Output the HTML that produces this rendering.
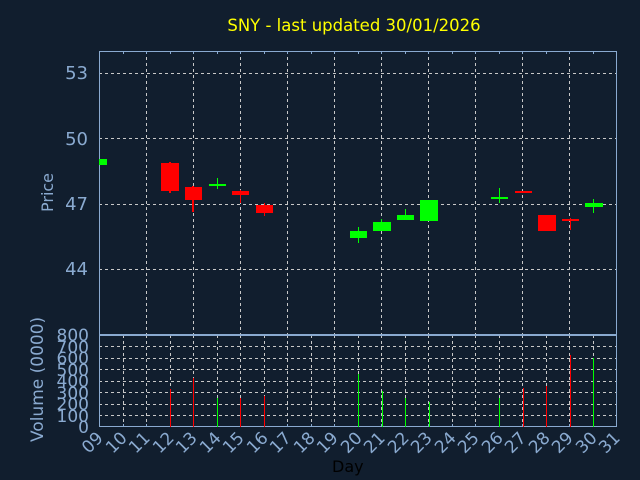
<!DOCTYPE html>
<html><head><style>
html,body{margin:0;padding:0;background:#111e2e;}
svg{display:block;font-family:"DejaVu Sans","Liberation Sans",sans-serif;}
</style></head><body>
<svg width="640" height="480" viewBox="0 0 640 480">
<rect width="640" height="480" fill="#111e2e"/>
<text x="354" y="31" fill="#ffff00" font-size="16.5" text-anchor="middle">SNY - last updated 30/01/2026</text>
<g stroke="#c8c8c8" stroke-width="1" stroke-dasharray="3,3" fill="none">
<line x1="99" y1="73.5" x2="617" y2="73.5"/>
<line x1="99" y1="138.5" x2="617" y2="138.5"/>
<line x1="99" y1="204.5" x2="617" y2="204.5"/>
<line x1="99" y1="269.5" x2="617" y2="269.5"/>
<line x1="146.5" y1="51" x2="146.5" y2="334"/>
<line x1="193.5" y1="51" x2="193.5" y2="334"/>
<line x1="240.5" y1="51" x2="240.5" y2="334"/>
<line x1="287.5" y1="51" x2="287.5" y2="334"/>
<line x1="334.5" y1="51" x2="334.5" y2="334"/>
<line x1="381.5" y1="51" x2="381.5" y2="334"/>
<line x1="428.5" y1="51" x2="428.5" y2="334"/>
<line x1="475.5" y1="51" x2="475.5" y2="334"/>
<line x1="522.5" y1="51" x2="522.5" y2="334"/>
<line x1="569.5" y1="51" x2="569.5" y2="334"/>
<line x1="99" y1="346.5" x2="617" y2="346.5"/>
<line x1="99" y1="358.5" x2="617" y2="358.5"/>
<line x1="99" y1="369.5" x2="617" y2="369.5"/>
<line x1="99" y1="381.5" x2="617" y2="381.5"/>
<line x1="99" y1="392.5" x2="617" y2="392.5"/>
<line x1="99" y1="404.5" x2="617" y2="404.5"/>
<line x1="99" y1="415.5" x2="617" y2="415.5"/>
<line x1="123.5" y1="335" x2="123.5" y2="427"/>
<line x1="146.5" y1="335" x2="146.5" y2="427"/>
<line x1="170.5" y1="335" x2="170.5" y2="427"/>
<line x1="193.5" y1="335" x2="193.5" y2="427"/>
<line x1="217.5" y1="335" x2="217.5" y2="427"/>
<line x1="240.5" y1="335" x2="240.5" y2="427"/>
<line x1="264.5" y1="335" x2="264.5" y2="427"/>
<line x1="287.5" y1="335" x2="287.5" y2="427"/>
<line x1="311.5" y1="335" x2="311.5" y2="427"/>
<line x1="334.5" y1="335" x2="334.5" y2="427"/>
<line x1="358.5" y1="335" x2="358.5" y2="427"/>
<line x1="381.5" y1="335" x2="381.5" y2="427"/>
<line x1="405.5" y1="335" x2="405.5" y2="427"/>
<line x1="428.5" y1="335" x2="428.5" y2="427"/>
<line x1="452.5" y1="335" x2="452.5" y2="427"/>
<line x1="475.5" y1="335" x2="475.5" y2="427"/>
<line x1="499.5" y1="335" x2="499.5" y2="427"/>
<line x1="522.5" y1="335" x2="522.5" y2="427"/>
<line x1="546.5" y1="335" x2="546.5" y2="427"/>
<line x1="569.5" y1="335" x2="569.5" y2="427"/>
<line x1="593.5" y1="335" x2="593.5" y2="427"/>
</g>
<g stroke="#8aaad0" fill="none" stroke-width="1">
<rect x="99.5" y="51.5" width="517" height="283"/>
<rect x="99.5" y="335.5" width="517" height="91"/>
<path d="M123.5 51v3M146.5 51v3M170.5 51v3M193.5 51v3M217.5 51v3M240.5 51v3M264.5 51v3M287.5 51v3M311.5 51v3M334.5 51v3M358.5 51v3M381.5 51v3M405.5 51v3M428.5 51v3M452.5 51v3M475.5 51v3M499.5 51v3M522.5 51v3M546.5 51v3M569.5 51v3M593.5 51v3"/>
<path d="M123.5 427v-3M146.5 427v-3M170.5 427v-3M193.5 427v-3M217.5 427v-3M240.5 427v-3M264.5 427v-3M287.5 427v-3M311.5 427v-3M334.5 427v-3M358.5 427v-3M381.5 427v-3M405.5 427v-3M428.5 427v-3M452.5 427v-3M475.5 427v-3M499.5 427v-3M522.5 427v-3M546.5 427v-3M569.5 427v-3M593.5 427v-3"/>
</g>
<g>
<rect x="99" y="159" width="8" height="6" fill="#00ff00"/>
<rect x="169" y="162" width="2" height="31" fill="#ff0000"/><rect x="161" y="163" width="18" height="28" fill="#ff0000"/>
<rect x="192" y="186" width="2" height="26" fill="#ff0000"/><rect x="185" y="187" width="17" height="13" fill="#ff0000"/>
<rect x="217" y="178" width="1" height="11" fill="#00ff00"/><rect x="209" y="184" width="17" height="2" fill="#00ff00"/>
<rect x="240" y="190" width="1" height="13" fill="#ff0000"/><rect x="232" y="191" width="17" height="4" fill="#ff0000"/>
<rect x="264" y="203" width="1" height="13" fill="#ff0000"/><rect x="256" y="205" width="17" height="8" fill="#ff0000"/>
<rect x="358" y="227" width="1" height="16" fill="#00ff00"/><rect x="350" y="231" width="17" height="7" fill="#00ff00"/>
<rect x="381" y="219" width="1" height="12" fill="#00ff00"/><rect x="373" y="222" width="18" height="9" fill="#00ff00"/>
<rect x="405" y="209" width="1" height="11" fill="#00ff00"/><rect x="397" y="215" width="17" height="5" fill="#00ff00"/>
<rect x="420" y="200" width="18" height="21" fill="#00ff00"/>
<rect x="499" y="188" width="1" height="15" fill="#00ff00"/><rect x="491" y="197" width="17" height="2" fill="#00ff00"/>
<rect x="515" y="191" width="17" height="2" fill="#ff0000"/>
<rect x="538" y="215" width="18" height="16" fill="#ff0000"/>
<rect x="570" y="218" width="1" height="12" fill="#ff0000"/><rect x="562" y="219" width="17" height="2" fill="#ff0000"/>
<rect x="593" y="199" width="1" height="14" fill="#00ff00"/><rect x="585" y="203" width="18" height="4" fill="#00ff00"/>
</g>
<g>
<rect x="170" y="389" width="1" height="38" fill="#ff0000"/>
<rect x="193" y="378" width="1" height="49" fill="#ff0000"/>
<rect x="217" y="398" width="1" height="29" fill="#00ff00"/>
<rect x="240" y="398" width="1" height="29" fill="#ff0000"/>
<rect x="264" y="396" width="1" height="31" fill="#ff0000"/>
<rect x="358" y="374" width="1" height="53" fill="#00ff00"/>
<rect x="382" y="391" width="1" height="36" fill="#00ff00"/>
<rect x="405" y="398" width="1" height="29" fill="#00ff00"/>
<rect x="429" y="402" width="1" height="25" fill="#00ff00"/>
<rect x="499" y="398" width="1" height="29" fill="#00ff00"/>
<rect x="523" y="388" width="1" height="39" fill="#ff0000"/>
<rect x="546" y="386" width="1" height="41" fill="#ff0000"/>
<rect x="570" y="355" width="1" height="72" fill="#ff0000"/>
<rect x="593" y="358" width="1" height="69" fill="#00ff00"/>
</g>
<g fill="#8aaad0" font-size="18" text-anchor="end">
<text x="88" y="79">53</text>
<text x="88" y="145">50</text>
<text x="88" y="210">47</text>
<text x="88" y="275">44</text>
</g>
<g fill="#8aaad0" font-size="17" text-anchor="end">
<text x="89" y="341">800</text>
<text x="89" y="353">700</text>
<text x="89" y="364">600</text>
<text x="89" y="376">500</text>
<text x="89" y="387">400</text>
<text x="89" y="399">300</text>
<text x="89" y="410">200</text>
<text x="89" y="422">100</text>
<text x="89" y="433">0</text>
</g>
<text transform="translate(53,212) rotate(-90)" fill="#8aaad0" font-size="16">Price</text>
<text transform="translate(43,442) rotate(-90)" fill="#8aaad0" font-size="17">Volume (0000)</text>
<g fill="#8aaad0" font-size="17" text-anchor="end">
<text transform="translate(104,439) rotate(-45)">09</text>
<text transform="translate(128,439) rotate(-45)">10</text>
<text transform="translate(151,439) rotate(-45)">11</text>
<text transform="translate(175,439) rotate(-45)">12</text>
<text transform="translate(198,439) rotate(-45)">13</text>
<text transform="translate(222,439) rotate(-45)">14</text>
<text transform="translate(245,439) rotate(-45)">15</text>
<text transform="translate(269,439) rotate(-45)">16</text>
<text transform="translate(292,439) rotate(-45)">17</text>
<text transform="translate(316,439) rotate(-45)">18</text>
<text transform="translate(339,439) rotate(-45)">19</text>
<text transform="translate(363,439) rotate(-45)">20</text>
<text transform="translate(386,439) rotate(-45)">21</text>
<text transform="translate(410,439) rotate(-45)">22</text>
<text transform="translate(433,439) rotate(-45)">23</text>
<text transform="translate(457,439) rotate(-45)">24</text>
<text transform="translate(480,439) rotate(-45)">25</text>
<text transform="translate(504,439) rotate(-45)">26</text>
<text transform="translate(527,439) rotate(-45)">27</text>
<text transform="translate(551,439) rotate(-45)">28</text>
<text transform="translate(574,439) rotate(-45)">29</text>
<text transform="translate(598,439) rotate(-45)">30</text>
<text transform="translate(621,439) rotate(-45)">31</text>
</g>
<text x="332" y="472" fill="#000000" font-size="16">Day</text>
</svg>
</body></html>
